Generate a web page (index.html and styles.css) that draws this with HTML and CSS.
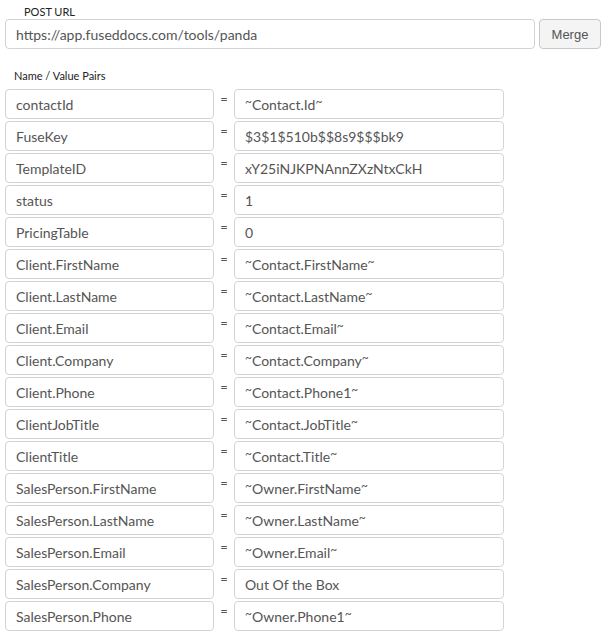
FILE: index.html
```html
<!DOCTYPE html>
<html>
<head>
<meta charset="utf-8">
<link rel="stylesheet" href="styles.css">
</head>
<body>
<div class="page">
  <div class="post-label">POST URL</div>
  <div class="url-row">
    <div class="field url-field">https://app.fuseddocs.com/tools/panda</div>
    <button class="merge-btn">Merge</button>
  </div>
  <div class="pairs-label">Name / Value Pairs</div>
  <div class="pairs">
    <div class="field">contactId</div><div class="eq">=</div><div class="field"><span class="tl">~</span>Contact.Id<span class="tl">~</span></div>
    <div class="field">FuseKey</div><div class="eq">=</div><div class="field">$3$1$510b$$8s9$$$bk9</div>
    <div class="field">TemplateID</div><div class="eq">=</div><div class="field">xY25iNJKPNAnnZXzNtxCkH</div>
    <div class="field">status</div><div class="eq">=</div><div class="field">1</div>
    <div class="field">PricingTable</div><div class="eq">=</div><div class="field">0</div>
    <div class="field">Client.FirstName</div><div class="eq">=</div><div class="field"><span class="tl">~</span>Contact.FirstName<span class="tl">~</span></div>
    <div class="field">Client.LastName</div><div class="eq">=</div><div class="field"><span class="tl">~</span>Contact.LastName<span class="tl">~</span></div>
    <div class="field">Client.Email</div><div class="eq">=</div><div class="field"><span class="tl">~</span>Contact.Email<span class="tl">~</span></div>
    <div class="field">Client.Company</div><div class="eq">=</div><div class="field"><span class="tl">~</span>Contact.Company<span class="tl">~</span></div>
    <div class="field">Client.Phone</div><div class="eq">=</div><div class="field"><span class="tl">~</span>Contact.Phone1<span class="tl">~</span></div>
    <div class="field">ClientJobTitle</div><div class="eq">=</div><div class="field"><span class="tl">~</span>Contact.JobTitle<span class="tl">~</span></div>
    <div class="field">ClientTitle</div><div class="eq">=</div><div class="field"><span class="tl">~</span>Contact.Title<span class="tl">~</span></div>
    <div class="field">SalesPerson.FirstName</div><div class="eq">=</div><div class="field"><span class="tl">~</span>Owner.FirstName<span class="tl">~</span></div>
    <div class="field">SalesPerson.LastName</div><div class="eq">=</div><div class="field"><span class="tl">~</span>Owner.LastName<span class="tl">~</span></div>
    <div class="field">SalesPerson.Email</div><div class="eq">=</div><div class="field"><span class="tl">~</span>Owner.Email<span class="tl">~</span></div>
    <div class="field">SalesPerson.Company</div><div class="eq">=</div><div class="field">Out Of the Box</div>
    <div class="field">SalesPerson.Phone</div><div class="eq">=</div><div class="field"><span class="tl">~</span>Owner.Phone1<span class="tl">~</span></div>
  </div>
</div>
</body>
</html>
```

FILE: styles.css
```css
html, body {
  margin: 0;
  padding: 0;
  background: #ffffff;
}
.page {
  padding: 4px 0 0 5px;
  font-family: "Lato", "Open Sans", sans-serif;
  color: #555555;
}
.post-label {
  margin-left: 19px;
  font-size: 11px;
  line-height: 15px;
  color: #222222;
}
.url-row {
  display: flex;
  gap: 4px;
  align-items: stretch;
}
.field {
  box-sizing: border-box;
  height: 30px;
  border: 1px solid #d3d3d3;
  border-radius: 4px;
  padding: 0 10px;
  font-size: 14px;
  line-height: 29px;
  color: #555555;
  white-space: nowrap;
  overflow: hidden;
  background: #fff;
}
.tl {
  font-size: 12px;
  vertical-align: 4px;
  line-height: 0;
}
.url-field {
  width: 530px;
}
.merge-btn {
  box-sizing: border-box;
  width: 62px;
  height: 30px;
  border: 1px solid #c8c8c8;
  border-radius: 4px;
  background: #f4f4f4;
  font-family: "Liberation Sans", Arial, sans-serif;
  font-size: 13px;
  color: #555555;
  padding: 0;
}
.pairs-label {
  margin: 19px 0 0 9px;
  font-size: 11px;
  line-height: 15px;
  color: #222222;
}
.pairs {
  margin-top: 6px;
  display: grid;
  grid-template-columns: 209px 20px 270px;
  grid-auto-rows: 30px;
  row-gap: 2px;
}
.eq {
  text-align: center;
  font-size: 13px;
  line-height: 13px;
  color: #555555;
  padding-top: 4px;
}
```
